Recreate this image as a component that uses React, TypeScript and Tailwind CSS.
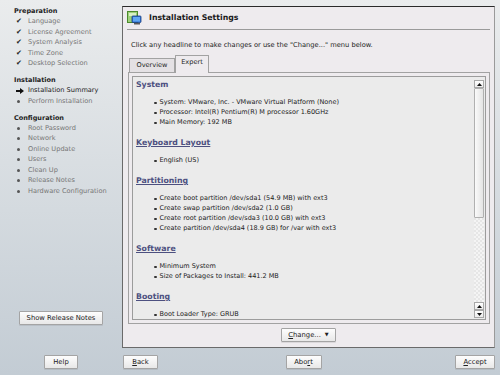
import React from 'react';

type Step = { label: string; state: 'done' | 'current' | 'todo' };

const groups: { title: string; steps: Step[] }[] = [
  {
    title: 'Preparation',
    steps: [
      { label: 'Language', state: 'done' },
      { label: 'License Agreement', state: 'done' },
      { label: 'System Analysis', state: 'done' },
      { label: 'Time Zone', state: 'done' },
      { label: 'Desktop Selection', state: 'done' },
    ],
  },
  {
    title: 'Installation',
    steps: [
      { label: 'Installation Summary', state: 'current' },
      { label: 'Perform Installation', state: 'todo' },
    ],
  },
  {
    title: 'Configuration',
    steps: [
      { label: 'Root Password', state: 'todo' },
      { label: 'Network', state: 'todo' },
      { label: 'Online Update', state: 'todo' },
      { label: 'Users', state: 'todo' },
      { label: 'Clean Up', state: 'todo' },
      { label: 'Release Notes', state: 'todo' },
      { label: 'Hardware Configuration', state: 'todo' },
    ],
  },
];

const sections: { title: string; items: string[]; underline: boolean }[] = [
  {
    title: 'System',
    underline: false,
    items: [
      'System: VMware, Inc. - VMware Virtual Platform (None)',
      'Processor: Intel(R) Pentium(R) M processor 1.60GHz',
      'Main Memory: 192 MB',
    ],
  },
  { title: 'Keyboard Layout', underline: true, items: ['English (US)'] },
  {
    title: 'Partitioning',
    underline: true,
    items: [
      'Create boot partition /dev/sda1 (54.9 MB) with ext3',
      'Create swap partition /dev/sda2 (1.0 GB)',
      'Create root partition /dev/sda3 (10.0 GB) with ext3',
      'Create partition /dev/sda4 (18.9 GB) for /var with ext3',
    ],
  },
  {
    title: 'Software',
    underline: true,
    items: ['Minimum System', 'Size of Packages to Install: 441.2 MB'],
  },
  { title: 'Booting', underline: true, items: ['Boot Loader Type: GRUB'] },
];

const Btn: React.FC<{ className?: string; children: React.ReactNode }> = ({ className = '', children }) => (
  <div
    className={`h-[14px] flex items-center justify-center border border-[#a4a4a4] rounded-[1px] bg-gradient-to-b from-[#fdfdfd] to-[#e8e8e8] shadow-[0_1px_0_rgba(0,0,0,0.08)] text-[6.8px] text-[#202020] ${className}`}
  >
    {children}
  </div>
);

const ArrowBtn: React.FC<{ up: boolean }> = ({ up }) => (
  <div className="h-[8px] flex items-center justify-center border border-[#a8a8a8] bg-gradient-to-b from-[#ffffff] to-[#ececec]">
    <svg width="5" height="3" viewBox="0 0 5 3">
      {up ? <polygon points="0,3 5,3 2.5,0" fill="#111" /> : <polygon points="0,0 5,0 2.5,3" fill="#111" />}
    </svg>
  </div>
);

const App: React.FC = () => {
  return (
    <div className="w-[500px] h-[375px] flex bg-gradient-to-b from-[#eaeced] to-[#c3ccd4] font-['DejaVu_Sans',sans-serif] overflow-hidden">
      {/* Sidebar */}
      <div className="w-[122px] flex flex-col shrink-0">
        <div className="pt-[6px] pl-[14px] flex flex-col gap-[6px]">
          {groups.map((g) => (
            <div key={g.title} className="flex flex-col">
              <div className="h-[10.5px] leading-[10.5px] text-[6.5px] font-bold text-[#222]">{g.title}</div>
              {g.steps.map((s) => (
                <div key={s.label} className="h-[10.5px] flex items-center">
                  <span className="w-[14px] flex items-center pl-[2px]">
                    {s.state === 'done' && <span className="text-[7px] leading-none text-[#222]">✔</span>}
                    {s.state === 'current' && (
                      <svg width="8" height="6" viewBox="0 0 8 6">
                        <polygon points="0,2 4,2 4,0 8,3 4,6 4,4 0,4" fill="#111" />
                      </svg>
                    )}
                    {s.state === 'todo' && <span className="ml-[1px] w-[3px] h-[3px] rounded-full bg-[#555]" />}
                  </span>
                  <span className={`text-[6.6px] leading-none ${s.state === 'current' ? 'text-[#1a1a1a]' : 'text-[#767676]'}`}>
                    {s.label}
                  </span>
                </div>
              ))}
            </div>
          ))}
        </div>
        <div className="flex-1" />
        <div className="flex justify-center">
          <Btn className="w-[84px]">Show Release Notes</Btn>
        </div>
        <div className="flex justify-center mt-[30px] mb-[6px]">
          <Btn className="w-[34px]">Help</Btn>
        </div>
      </div>

      {/* Main */}
      <div className="flex-1 flex flex-col pr-[5px]">
        <div className="mt-[6px] h-[342px] flex flex-col bg-[#eeebee] border border-[#6a6a6a] border-t-[#2a2a2a] border-r-[#9a9a9a]">
          {/* Header */}
          <div className="h-[22px] flex items-center pl-[4px]">
            <svg width="15" height="14" viewBox="0 0 15 14">
              <rect x="0.5" y="0.5" width="10" height="11" fill="#9ed07a" stroke="#4b8a2c" />
              <rect x="2" y="2" width="7" height="3" fill="#d8f0c4" />
              <rect x="5" y="5" width="9" height="6.5" rx="0.8" fill="#2f6fd0" stroke="#1b3f80" strokeWidth="0.8" />
              <rect x="6" y="6" width="7" height="4.5" fill="#5fa6f2" />
              <rect x="7" y="12" width="6" height="1.5" fill="#5a5a5a" />
            </svg>
            <span className="ml-[7px] text-[7.8px] font-bold text-[#1a1a1a]">Installation Settings</span>
          </div>
          <div className="mx-[4px] h-px bg-[#9a9a9a]" />
          {/* Instruction */}
          <div className="mt-[10px] pl-[8px] h-[10px] flex items-center text-[6.7px] text-[#222]">
            Click any headline to make changes or use the "Change..." menu below.
          </div>
          {/* Tabs */}
          <div className="mt-[5px] pl-[6px] flex items-end h-[17px]">
            <div className="h-[14px] w-[46px] flex items-center justify-center border border-b-0 border-[#a2a2a2] bg-[#e4e1e4] text-[6.6px] text-[#222] rounded-tl-[1px]">
              Overview
            </div>
            <div className="h-[18px] w-[34px] -mb-px flex items-center justify-center border border-b-0 border-[#a2a2a2] bg-[#eeebee] text-[6.6px] text-[#222] relative z-10 rounded-t-[1px] pb-[3px]">
              Expert
            </div>
          </div>
          {/* Tab frame */}
          <div className="ml-[5px] mr-[4px] h-[252px] border border-[#a2a2a2] p-[3px] flex">
            <div className="flex-1 flex bg-[#ebebeb] border border-[#9c9c9c]">
              <div className="flex-1 overflow-hidden pl-[3px] pt-[3px] flex flex-col gap-[10px]">
                {sections.map((sec) => (
                  <div key={sec.title} className="flex flex-col">
                    <div
                      className={`h-[10px] leading-[10px] text-[7.8px] font-bold text-[#4d5080] ${sec.underline ? 'underline underline-offset-[1px]' : ''}`}
                    >
                      {sec.title}
                    </div>
                    <div className="mt-[8px] flex flex-col pl-[18px]">
                      {sec.items.map((it) => (
                        <div key={it} className="h-[10px] flex items-center text-[6.5px] text-[#222] whitespace-nowrap">
                          <span className="w-[2.5px] h-[2.5px] rounded-full bg-[#333] mr-[3px]" />
                          {it}
                        </div>
                      ))}
                    </div>
                  </div>
                ))}
              </div>
              {/* Scrollbar */}
              <div className="w-[10px] mt-[3px] mb-px mr-px flex flex-col">
                <ArrowBtn up />
                <div className="h-[130px] border border-[#b0b0b0] rounded-[1px] bg-gradient-to-r from-[#fafafa] to-[#e4e4e4] flex items-center justify-center">
                  <div className="w-[4px] h-[8px] bg-[radial-gradient(#b8b8b8_0.6px,transparent_0.7px)] bg-[length:2px_2px]" />
                </div>
                <div className="flex-1 bg-[repeating-conic-gradient(#f4f4f4_0%_25%,#e6e6e6_0%_50%)] bg-[length:4px_4px]" />
                <ArrowBtn up />
                <ArrowBtn up={false} />
              </div>
            </div>
          </div>
          {/* Change button */}
          <div className="mt-[4px] flex justify-center">
            <Btn className="w-[55px] gap-[4px]">
              <span>
                <span className="underline">C</span>hange...
              </span>
              <span className="text-[5px]">▼</span>
            </Btn>
          </div>
        </div>
        {/* Bottom buttons */}
        <div className="mt-[7px] flex items-center justify-between pl-px">
          <Btn className="w-[35px]">
            <span>
              <span className="underline">B</span>ack
            </span>
          </Btn>
          <Btn className="w-[36px] -ml-[6px]">
            <span>
              Abo<span className="underline">r</span>t
            </span>
          </Btn>
          <Btn className="w-[40px]">
            <span>
              <span className="underline">A</span>ccept
            </span>
          </Btn>
        </div>
      </div>
    </div>
  );
};

export default App;
